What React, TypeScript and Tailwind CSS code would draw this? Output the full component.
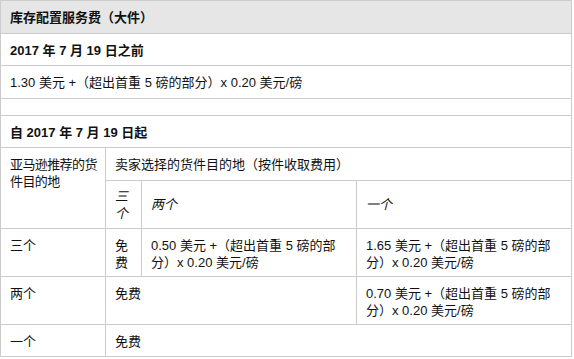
export default function App() {
  const td = "border border-[#cccccc] px-[9px] pt-[8px] pb-0 align-top text-left";
  return (
    <div className="bg-white w-[574px] h-[359px] overflow-hidden">
      <table className="table-fixed border-collapse w-[571px] text-[13px] leading-[17px] text-[#111111] font-[family-name:'Liberation_Sans','Noto_Sans_CJK_SC',sans-serif]">
        <colgroup>
          <col className="w-[105px]" />
          <col className="w-[36px]" />
          <col className="w-[215px]" />
          <col className="w-[215px]" />
        </colgroup>
        <tbody>
          <tr className="h-[33px]">
            <td colSpan={4} className={`${td} bg-[#e6e6e6] font-bold`}>库存配置服务费（大件）</td>
          </tr>
          <tr className="h-[32px]">
            <td colSpan={4} className={`${td} font-bold`}>2017 年 7 月 19 日之前</td>
          </tr>
          <tr className="h-[33px]">
            <td colSpan={4} className={td}>1.30 美元 +（超出首重 5 磅的部分）x 0.20 美元/磅</td>
          </tr>
          <tr className="h-[17px]">
            <td colSpan={4} className="border border-[#cccccc] p-0"></td>
          </tr>
          <tr className="h-[32px]">
            <td colSpan={4} className={`${td} font-bold`}>自 2017 年 7 月 19 日起</td>
          </tr>
          <tr className="h-[33px]">
            <td rowSpan={2} className={`${td} whitespace-nowrap tracking-[-0.6px]`}>亚马逊推荐的货<br />件目的地</td>
            <td colSpan={3} className={td}>卖家选择的货件目的地（按件收取费用）</td>
          </tr>
          <tr className="h-[48px]">
            <td className="border border-[#cccccc] px-[9px] py-0 align-middle italic">三<br />个</td>
            <td className="border border-[#cccccc] px-[9px] py-0 align-middle italic">两个</td>
            <td className="border border-[#cccccc] px-[9px] py-0 align-middle italic">一个</td>
          </tr>
          <tr className="h-[48px]">
            <td className={td}>三个</td>
            <td className={td}>免<br />费</td>
            <td className={td}>0.50 美元 +（超出首重 5 磅的部<br />分）x 0.20 美元/磅</td>
            <td className={td}>1.65 美元 +（超出首重 5 磅的部<br />分）x 0.20 美元/磅</td>
          </tr>
          <tr className="h-[48px]">
            <td className={td}>两个</td>
            <td colSpan={2} className={td}>免费</td>
            <td className={td}>0.70 美元 +（超出首重 5 磅的部<br />分）x 0.20 美元/磅</td>
          </tr>
          <tr className="h-[32px]">
            <td className={td}>一个</td>
            <td colSpan={3} className={td}>免费</td>
          </tr>
        </tbody>
      </table>
    </div>
  );
}
